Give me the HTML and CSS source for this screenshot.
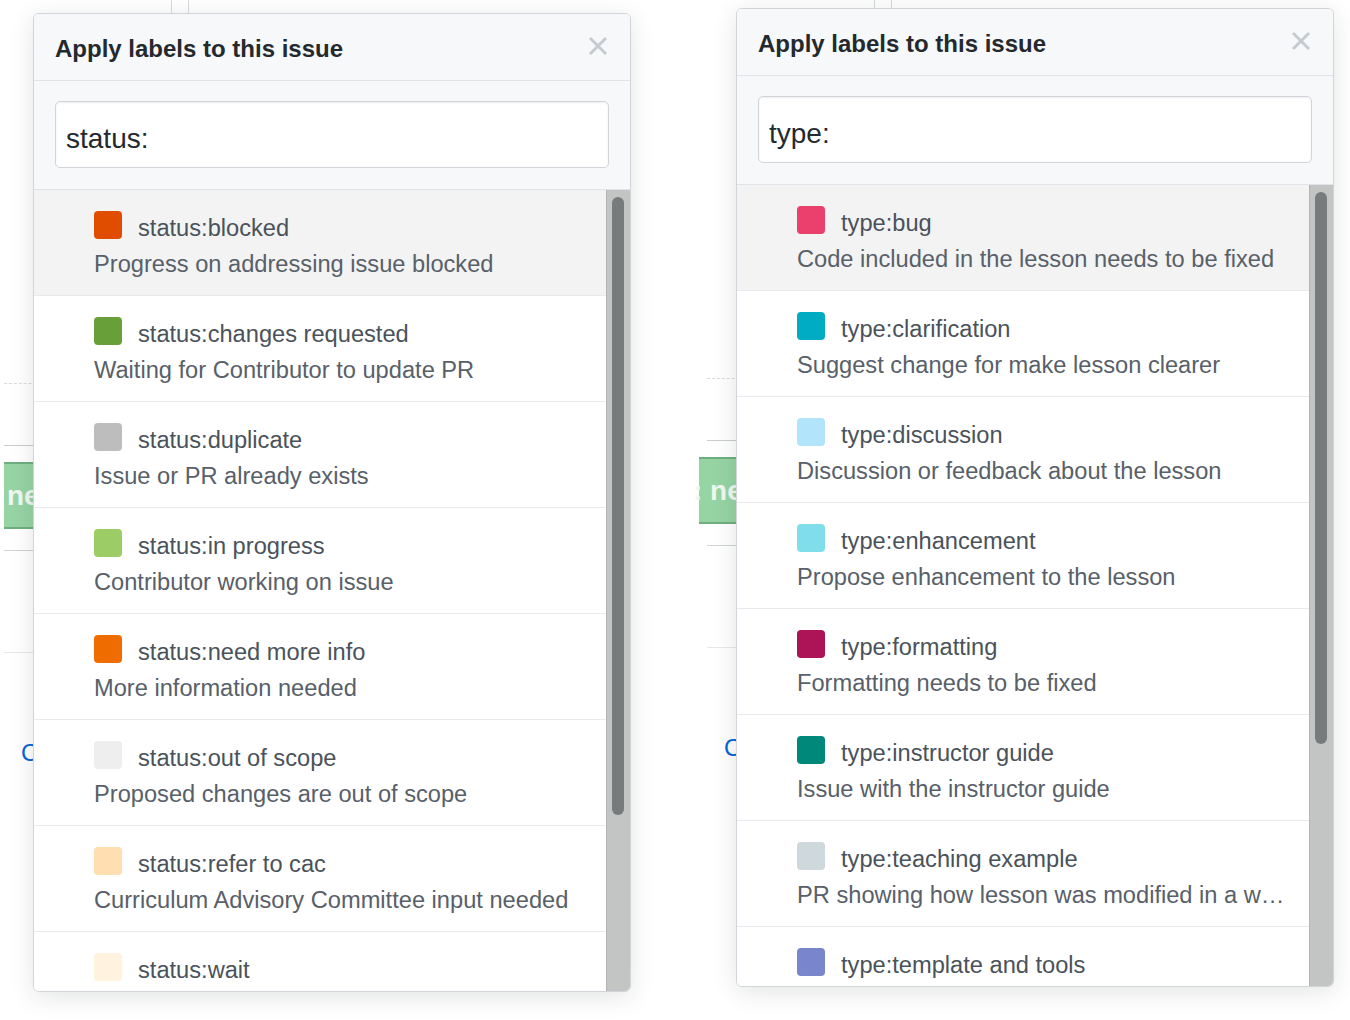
FILE: index.html
```html
<!DOCTYPE html>
<html lang="en">
<head>
<meta charset="utf-8">
<title>Apply labels</title>
<link rel="stylesheet" href="styles.css">
</head>
<body>
<div class="shots">
  <section class="shot shot-left">
    <div class="page">
      <div class="vlines"></div>
      <div class="dash"></div>
      <div class="hline hline-a"></div>
      <div class="btn-green"><span>ne</span></div>
      <div class="hline hline-b"></div>
      <div class="hline hline-c"></div>
      <div class="link-c">C</div>
    </div>
    <div class="modal">
      <div class="modal-header">
        <h2>Apply labels to this issue</h2>
        <svg class="close" width="20" height="20" viewBox="0 0 20 20"><path d="M2 2 L18 18 M18 2 L2 18" stroke="#c6cbd1" stroke-width="3" fill="none"/></svg>
      </div>
      <div class="filter"><div class="input">status:</div></div>
      <div class="list-wrap">
        <div class="list">
          <div class="row row-active"><div class="name"><span class="swatch" style="background:#e14d00"></span>status:blocked</div><div class="desc">Progress on addressing issue blocked</div></div>
          <div class="row"><div class="name"><span class="swatch" style="background:#689f38"></span>status:changes requested</div><div class="desc">Waiting for Contributor to update PR</div></div>
          <div class="row"><div class="name"><span class="swatch" style="background:#bdbdbd"></span>status:duplicate</div><div class="desc">Issue or PR already exists</div></div>
          <div class="row"><div class="name"><span class="swatch" style="background:#9ccc65"></span>status:in progress</div><div class="desc">Contributor working on issue</div></div>
          <div class="row"><div class="name"><span class="swatch" style="background:#ef6c00"></span>status:need more info</div><div class="desc">More information needed</div></div>
          <div class="row"><div class="name"><span class="swatch" style="background:#eeeeee"></span>status:out of scope</div><div class="desc">Proposed changes are out of scope</div></div>
          <div class="row"><div class="name"><span class="swatch" style="background:#ffdfb2"></span>status:refer to cac</div><div class="desc">Curriculum Advisory Committee input needed</div></div>
          <div class="row row-last"><div class="name"><span class="swatch" style="background:#fff2df"></span>status:wait</div></div>
        </div>
        <div class="scrollbar"><div class="thumb" style="height:618px"></div></div>
      </div>
    </div>
  </section>
  <section class="shot shot-right">
    <div class="page">
      <div class="vlines"></div>
      <div class="dash"></div>
      <div class="hline hline-a"></div>
      <div class="btn-green btn-green-r"><span>: ne</span></div>
      <div class="hline hline-b"></div>
      <div class="hline hline-c"></div>
      <div class="link-c">C</div>
    </div>
    <div class="modal">
      <div class="modal-header">
        <h2>Apply labels to this issue</h2>
        <svg class="close" width="20" height="20" viewBox="0 0 20 20"><path d="M2 2 L18 18 M18 2 L2 18" stroke="#c6cbd1" stroke-width="3" fill="none"/></svg>
      </div>
      <div class="filter"><div class="input">type:</div></div>
      <div class="list-wrap">
        <div class="list">
          <div class="row row-active"><div class="name"><span class="swatch" style="background:#eb3f6d"></span>type:bug</div><div class="desc">Code included in the lesson needs to be fixed</div></div>
          <div class="row"><div class="name"><span class="swatch" style="background:#00acc1"></span>type:clarification</div><div class="desc">Suggest change for make lesson clearer</div></div>
          <div class="row"><div class="name"><span class="swatch" style="background:#b2e5fc"></span>type:discussion</div><div class="desc">Discussion or feedback about the lesson</div></div>
          <div class="row"><div class="name"><span class="swatch" style="background:#80deea"></span>type:enhancement</div><div class="desc">Propose enhancement to the lesson</div></div>
          <div class="row"><div class="name"><span class="swatch" style="background:#ad1457"></span>type:formatting</div><div class="desc">Formatting needs to be fixed</div></div>
          <div class="row"><div class="name"><span class="swatch" style="background:#00897b"></span>type:instructor guide</div><div class="desc">Issue with the instructor guide</div></div>
          <div class="row"><div class="name"><span class="swatch" style="background:#cfd8dc"></span>type:teaching example</div><div class="desc">PR showing how lesson was modified in a workshop</div></div>
          <div class="row row-last"><div class="name"><span class="swatch" style="background:#7986cb"></span>type:template and tools</div></div>
        </div>
        <div class="scrollbar"><div class="thumb" style="height:552px"></div></div>
      </div>
    </div>
  </section>
</div>
</body>
</html>
```
FILE: styles.css
```css
* { box-sizing: border-box; }
html, body {
  margin: 0;
  padding: 0;
  background: #ffffff;
  width: 1350px;
  height: 1020px;
  overflow: hidden;
  font-family: "Liberation Sans", Arial, Helvetica, sans-serif;
}
.shots {
  display: flex;
  width: 1350px;
  height: 1020px;
}
.shot {
  position: relative;
  height: 1025px;
  flex: none;
}
.shot-left { width: 703px; }
.shot-right { width: 647px; margin-top: -5px; }

/* underlying page fragments */
.page {
  width: 120px;
  display: flex;
  flex-direction: column;
}
.vlines {
  margin-left: 171px;
  width: 18px;
  height: 13px;
  border-left: 1px solid #d6d9dd;
  border-right: 1px solid #d6d9dd;
}
.dash {
  margin-top: 370px;
  margin-left: 4px;
  height: 0;
  border-top: 1px dashed #d9dbde;
}
.hline { height: 0; margin-left: 4px; }
.hline-a { margin-top: 61px; border-top: 1px solid #c9ccd0; }
.btn-green {
  margin-top: 16px;
  margin-left: 4px;
  height: 67px;
  background: #96d4a4;
  border-top: 2px solid #6fae7e;
  border-bottom: 2px solid #6fae7e;
  color: #eef8f0;
  font-weight: bold;
  font-size: 28px;
  line-height: 63px;
  padding-left: 3px;
  white-space: nowrap;
}
.btn-green-r { margin-left: -4px; padding-left: 0; text-indent: -6px; }
.hline-b { margin-top: 21px; border-top: 1px solid #d0d3d7; }
.hline-c { margin-top: 101px; border-top: 1px solid #e6e8eb; }
.link-c {
  margin-top: 86px;
  margin-left: 21px;
  color: #0366d6;
  font-size: 24px;
  line-height: 28px;
}

/* modal */
.modal {
  position: absolute;
  left: 33px;
  top: 13px;
  width: 598px;
  height: 979px;
  background: #ffffff;
  border: 1px solid #d1d5da;
  border-radius: 6px;
  overflow: hidden;
  box-shadow: 0 5px 24px rgba(27, 31, 35, 0.12);
  display: flex;
  flex-direction: column;
}
.modal-header {
  flex: none;
  height: 67px;
  background: #f6f8fa;
  border-bottom: 1px solid #e1e4e8;
  display: flex;
  align-items: center;
  justify-content: space-between;
  padding: 0 22px 0 21px;
}
.modal-header h2 {
  margin: 3px 0 0;
  font-size: 24px;
  font-weight: bold;
  color: #24292e;
  line-height: 30px;
}
.close { display: block; margin-top: -2px; }
.filter {
  flex: none;
  background: #f6f8fa;
  padding: 20px 21px 21px;
  border-bottom: 1px solid #e1e4e8;
}
.input {
  height: 67px;
  background: #ffffff;
  border: 1px solid #d1d5da;
  border-radius: 5px;
  box-shadow: inset 0 1px 2px rgba(27, 31, 35, 0.075);
  font-size: 28px;
  color: #24292e;
  line-height: 73px;
  padding-left: 10px;
}
.list-wrap {
  flex: 1;
  display: flex;
  min-height: 0;
}
.list {
  flex: 1;
  min-width: 0;
  overflow: hidden;
}
.row {
  height: 106px;
  border-bottom: 1px solid #e9eaee;
  padding: 20px 14px 0 60px;
  background: #ffffff;
}
.row-last { border-bottom: 0; }
.row-active { background: #f3f3f3; }
.name {
  display: flex;
  align-items: flex-start;
  font-size: 23.65px;
  line-height: 36px;
  color: #4a525a;
  white-space: nowrap;
}
.swatch {
  flex: none;
  width: 28px;
  height: 28px;
  border-radius: 4px;
  margin-top: 1px;
  margin-right: 16px;
}
.desc {
  font-size: 23.65px;
  line-height: 36px;
  color: #586069;
  white-space: nowrap;
  overflow: hidden;
  text-overflow: ellipsis;
}
.scrollbar {
  flex: none;
  width: 24px;
  background: #c3c4c4;
  border-left: 1px solid #b3b4b4;
  padding: 7px 0 0 5px;
}
.thumb {
  width: 12px;
  background: #787b7b;
  border-radius: 6px;
}
```
